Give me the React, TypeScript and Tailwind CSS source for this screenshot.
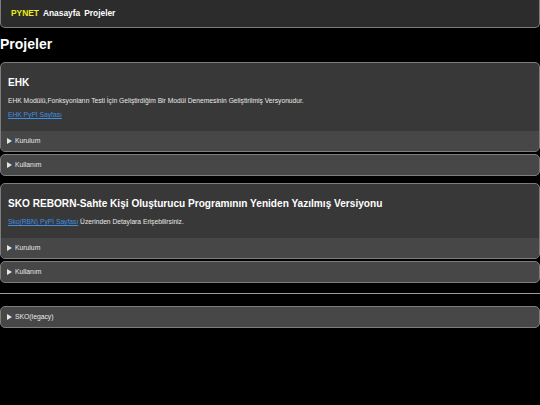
import React from "react";

const font = { fontFamily: '"Liberation Sans", Arial, sans-serif' };

function Arrow() {
  return (
    <svg width="5" height="6" viewBox="0 0 5 6" className="shrink-0">
      <polygon points="0,0 5,3 0,6" fill="#e5e5e5" />
    </svg>
  );
}

function Summary({ label, boxed = false }: { label: string; boxed?: boolean }) {
  if (boxed) {
    return (
      <div className="flex h-[22px] items-center gap-[3px] rounded-[5px] border border-[#7d7d7d] bg-[#474747] px-[6px] text-[6.8px] text-[#e8e8e8]">
        <Arrow />
        <span>{label}</span>
      </div>
    );
  }
  return (
    <div className="flex h-[20px] items-center gap-[3px] bg-[#474747] px-[6px] text-[6.8px] text-[#e8e8e8]">
      <Arrow />
      <span>{label}</span>
    </div>
  );
}

function Card({ title, children }: { title: string; children: React.ReactNode }) {
  return (
    <div className="overflow-hidden rounded-[5px] border border-[#7d7d7d] bg-[#383838]">
      <div className="px-[7px] pt-[14px] pb-[12px]">
        <h2 className="text-[10.1px] leading-[12px] font-bold text-white">{title}</h2>
        {children}
      </div>
      <Summary label="Kurulum" />
    </div>
  );
}

export default function App() {
  return (
    <div className="min-h-[405px] bg-black text-white" style={font}>
      <nav className="flex h-[28px] items-center gap-[4px] rounded-b-[5px] border-x border-b border-[#7d7d7d] bg-[#2c2c2c] px-[10px] text-[8.4px] font-bold">
        <span className="text-[#eded1a]">PYNET</span>
        <span>Anasayfa</span>
        <span>Projeler</span>
      </nav>

      <h1 className="mt-[8px] text-[14px] leading-[16px] font-bold">Projeler</h1>

      <div className="mt-[10px] flex flex-col gap-[2px]">
        <Card title="EHK">
          <p className="mt-[8px] text-[6.7px] leading-[8px] text-[#e8e8e8]">
            EHK Modülü,Fonksyonların Testi İçin Geliştirdiğim Bir Modül Denemesinin Geliştirilmiş Versyonudur.
          </p>
          <a href="#" className="mt-[6px] block text-[6.7px] leading-[8px] text-[#3f8fe0] underline">
            EHK PyPİ Sayfası
          </a>
        </Card>
        <Summary label="Kullanım" boxed />
      </div>

      <div className="mt-[7px] flex flex-col gap-[2px]">
        <Card title="SKO REBORN-Sahte Kişi Oluşturucu Programının Yeniden Yazılmış Versiyonu">
          <p className="mt-[8px] text-[6.7px] leading-[8px] text-[#e8e8e8]">
            <a href="#" className="text-[#3f8fe0] underline">
              Sko(RBN) PyPİ Sayfası
            </a>{" "}
            Üzerinden Detaylara Erişebilirsiniz.
          </p>
        </Card>
        <Summary label="Kullanım" boxed />
      </div>

      <hr className="mt-[10px] border-t border-[#9a9a9a]" />

      <div className="mt-[12px]">
        <Summary label="SKO(legacy)" boxed />
      </div>
    </div>
  );
}
